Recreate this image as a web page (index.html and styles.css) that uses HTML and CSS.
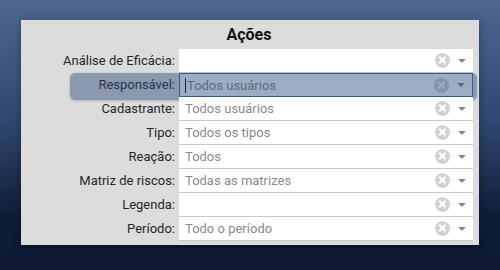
FILE: index.html
```html
<!DOCTYPE html>
<html>
<head>
    <title>Ações</title>
    <link rel="stylesheet" href="styles.css">
</head>
<body>
    <div class="panel">
        <h1>Ações</h1>
        <div class="fields">
            <div class="row">
                <label>Análise de Eficácia:</label>
                <div class="select"><span class="value"></span><span class="clear"></span><span class="arrow"></span></div>
            </div>
            <div class="row active">
                <label>Responsável:</label>
                <div class="select focused"><span class="value"><i class="caret"></i>Todos usuários</span><span class="clear"></span><span class="arrow"></span></div>
                <div class="highlight"></div>
            </div>
            <div class="row">
                <label>Cadastrante:</label>
                <div class="select"><span class="value">Todos usuários</span><span class="clear"></span><span class="arrow"></span></div>
            </div>
            <div class="row">
                <label>Tipo:</label>
                <div class="select"><span class="value">Todos os tipos</span><span class="clear"></span><span class="arrow"></span></div>
            </div>
            <div class="row">
                <label>Reação:</label>
                <div class="select"><span class="value">Todos</span><span class="clear"></span><span class="arrow"></span></div>
            </div>
            <div class="row">
                <label>Matriz de riscos:</label>
                <div class="select"><span class="value">Todas as matrizes</span><span class="clear"></span><span class="arrow"></span></div>
            </div>
            <div class="row">
                <label>Legenda:</label>
                <div class="select"><span class="value"></span><span class="clear"></span><span class="arrow"></span></div>
            </div>
            <div class="row">
                <label>Período:</label>
                <div class="select"><span class="value">Todo o período</span><span class="clear"></span><span class="arrow"></span></div>
            </div>
        </div>
    </div>
</body>
</html>
```

FILE: styles.css
```css
body {
    font-family: Roboto, 'Liberation Sans', sans-serif;
    margin: 0;
    padding: 20px 21px 0 21px;
    width: 500px;
    height: 270px;
    box-sizing: border-box;
    overflow: hidden;
    background: linear-gradient(180deg, #4d6792 0%, #2f4871 45%, #0e1d36 80%, #0b1830 100%);
}
.panel {
    width: 458px;
    background-color: #dcdcdc;
    box-shadow: 0 2px 8px rgba(0, 0, 0, 0.35);
    padding: 0 6px 4px 0;
    box-sizing: border-box;
}
h1 {
    margin: 0;
    height: 29px;
    line-height: 29px;
    text-align: center;
    font-size: 16px;
    font-weight: 700;
    color: #111;
    padding-left: 4px;
}
.row {
    display: grid;
    grid-template-columns: 158px 1fr;
    height: 24px;
    position: relative;
}
label {
    font-size: 13px;
    color: #262626;
    text-align: right;
    line-height: 24px;
    padding-right: 4px;
}
.select {
    background-color: #fff;
    border-bottom: 1px solid #c8c8c8;
    display: flex;
    align-items: center;
    height: 24px;
    box-sizing: border-box;
}
.select.focused {
    border: 1px solid #3e6aa6;
}
.value {
    flex: 1;
    font-size: 13px;
    color: #8a8a8a;
    padding-left: 6px;
    display: flex;
    align-items: center;
}
.focused .value {
    padding-left: 5px;
}
.caret {
    display: inline-block;
    width: 1px;
    height: 15px;
    background-color: #111;
    margin-right: 1px;
}
.clear {
    width: 15px;
    height: 15px;
    border-radius: 50%;
    background-color: #d2d2d2;
    position: relative;
    margin-right: 8px;
}
.clear::before, .clear::after {
    content: "";
    position: absolute;
    left: 3px;
    top: 6px;
    width: 9px;
    height: 2px;
    background-color: #fff;
    transform: rotate(45deg);
}
.clear::after {
    transform: rotate(-45deg);
}
.arrow {
    width: 0;
    height: 0;
    border-left: 4px solid transparent;
    border-right: 4px solid transparent;
    border-top: 4px solid #8a8a8a;
    margin-right: 7px;
}
.highlight {
    position: absolute;
    left: 49px;
    right: -4px;
    top: 0;
    bottom: -3px;
    border-radius: 5px;
    background-color: rgba(40, 70, 120, 0.45);
    box-shadow: 0 1px 3px rgba(0, 0, 0, 0.2);
}
```
